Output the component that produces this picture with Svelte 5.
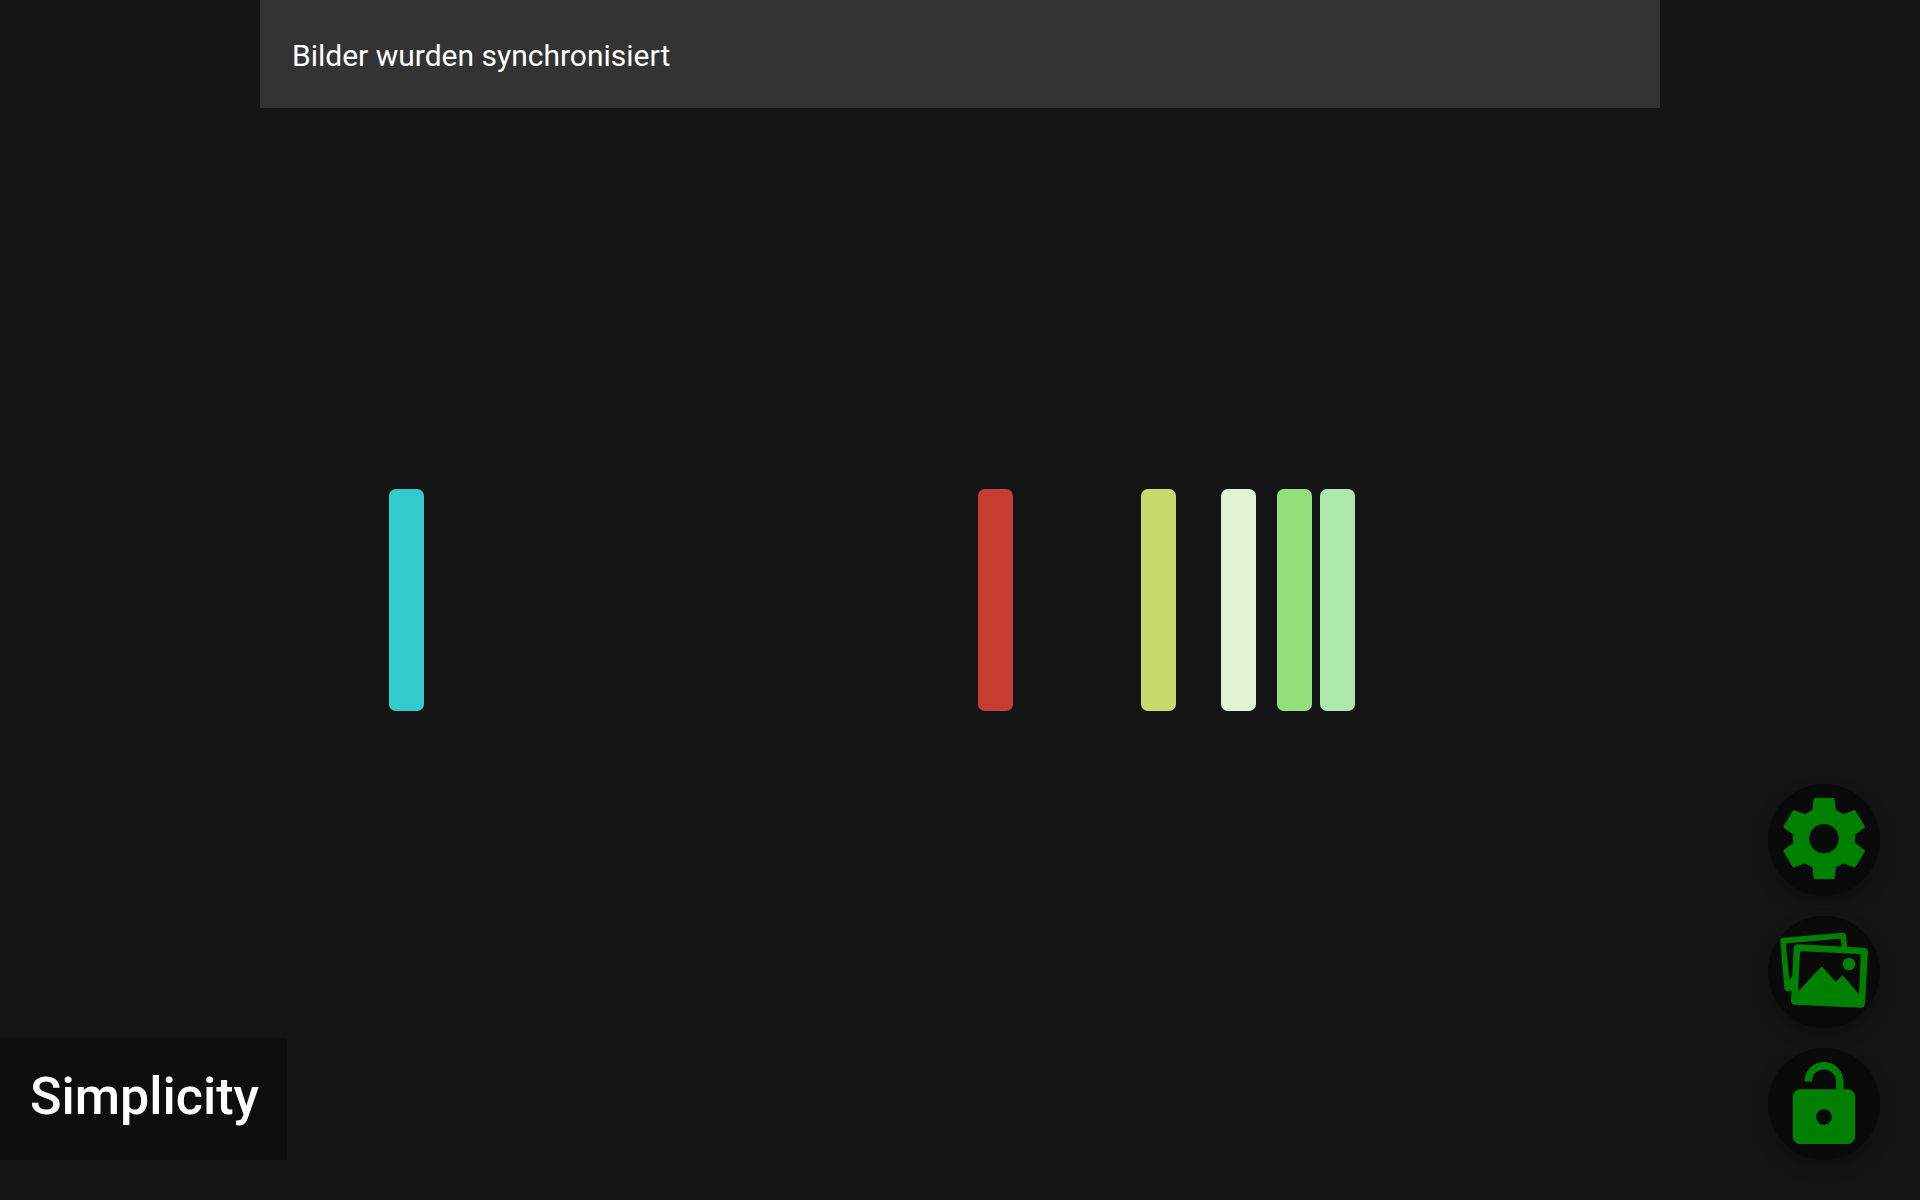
<script>
  const title = 'Simplicity';
  const message = 'Bilder wurden synchronisiert';

  const stripes = [
    { x: 389, color: '#33cccc' },
    { x: 978, color: '#c83d32' },
    { x: 1141, color: '#c8da6c' },
    { x: 1221, color: '#e1f3d3' },
    { x: 1277, color: '#92df7c' },
    { x: 1320, color: '#ace9ab' }
  ];
</script>

<div class="screen">
  <svg class="wallpaper" viewBox="0 0 1920 1200" preserveAspectRatio="xMidYMid slice" aria-hidden="true">
    {#each stripes as stripe}
      <rect x={stripe.x} y="489" width="35" height="222" rx="7" fill={stripe.color} />
    {/each}
  </svg>

  <div class="toast" role="status">{message}</div>

  <footer class="bottom">
    <h1 class="title">{title}</h1>

    <div class="actions">
      <button type="button" class="fab" aria-label="Einstellungen">
        <svg viewBox="72 56 300 300" aria-hidden="true">
          <path fill-rule="evenodd" d="M196 83H249Q253 83 254 87L258 120Q270 125 280 132L311 120Q315 119 317 122L344 167Q346 170 343 173L315 193V218L343 238Q346 240 344 244L317 289Q315 292 311 291L280 279Q270 286 258 291L254 323Q253 327 249 327H196Q192 327 191 323L187 291Q175 286 165 279L134 291Q130 292 128 289L101 244Q99 240 102 238L130 218Q128 205 130 193L102 173Q99 170 101 167L128 122Q130 119 134 120L165 132Q175 125 187 120L191 87Q192 83 196 83ZM222 161A44 44 0 1 0 222 249A44 44 0 1 0 222 161Z" />
        </svg>
      </button>
      <button type="button" class="fab" aria-label="Bilder">
        <svg viewBox="72 64 300 300" aria-hidden="true">
          <path d="M99 114L278 99Q287 99 288 107L292 143L275 142L273 122Q272 117 267 117L113 131Q107 132 108 138L118 240L130 226L127 275H114Q105 275 103 266L91 124Q91 115 99 114Z" />
          <path fill-rule="evenodd" d="M145 134L342 144Q354 145 354 156L345 313Q344 324 333 324L134 315Q123 314 123 303L131 146Q132 134 145 134ZM155 155Q150 155 150 160L144 276L215 200L257 246L278 227L327 284L332 168Q332 163 327 163Z" />
          <circle cx="297" cy="193" r="19" />
        </svg>
      </button>
      <button type="button" class="fab" aria-label="Entsperren">
        <svg viewBox="0 0 512 512" aria-hidden="true">
          <path fill-rule="evenodd" d="M376 186h-20v-40c0-55-45-100-100-100S156 91 156 146h38c0-34 28-62 62-62s62 28 62 62v40H136c-22 0-40 18-40 40v200c0 22 18 40 40 40h240c22 0 40-18 40-40V226c0-22-18-40-40-40zM256 368c-22 0-40-18-40-40s18-40 40-40 40 18 40 40-18 40-40 40z" />
        </svg>
      </button>
    </div>
  </footer>
</div>

<style>
  :global(body) {
    margin: 0;
    background: #141414;
  }

  .screen {
    position: relative;
    box-sizing: border-box;
    min-height: 100vh;
    display: flex;
    flex-direction: column;
    justify-content: space-between;
    padding-bottom: 40px;
    font-family: Roboto, sans-serif;
    color: #fff;
  }

  .wallpaper {
    position: absolute;
    inset: 0;
    width: 100%;
    height: 100%;
  }

  .toast {
    position: relative;
    box-sizing: border-box;
    width: 100%;
    max-width: 1400px;
    margin: 0 auto;
    padding: 38px 32px 34px;
    background: #333;
    font-size: 30px;
    line-height: 36px;
  }

  .bottom {
    position: relative;
    display: flex;
    align-items: flex-end;
    justify-content: space-between;
    padding-right: 40px;
  }

  .title {
    margin: 0;
    padding: 29px 28px 33px 30px;
    background: #0e0e0e;
    font-size: 52px;
    font-weight: 500;
    line-height: 60px;
  }

  .actions {
    display: flex;
    flex-direction: column;
    gap: 20px;
  }

  .fab {
    display: flex;
    align-items: center;
    justify-content: center;
    box-sizing: border-box;
    width: 112px;
    height: 112px;
    padding: 0 0 2px;
    border: 0;
    border-radius: 50%;
    background: #0a0a0a;
    box-shadow: 0 8px 16px rgba(0, 0, 0, 0.26);
    color: #008000;
    cursor: pointer;
  }

  .fab svg {
    flex: none;
    width: 100px;
    height: 100px;
    fill: currentColor;
  }
</style>
